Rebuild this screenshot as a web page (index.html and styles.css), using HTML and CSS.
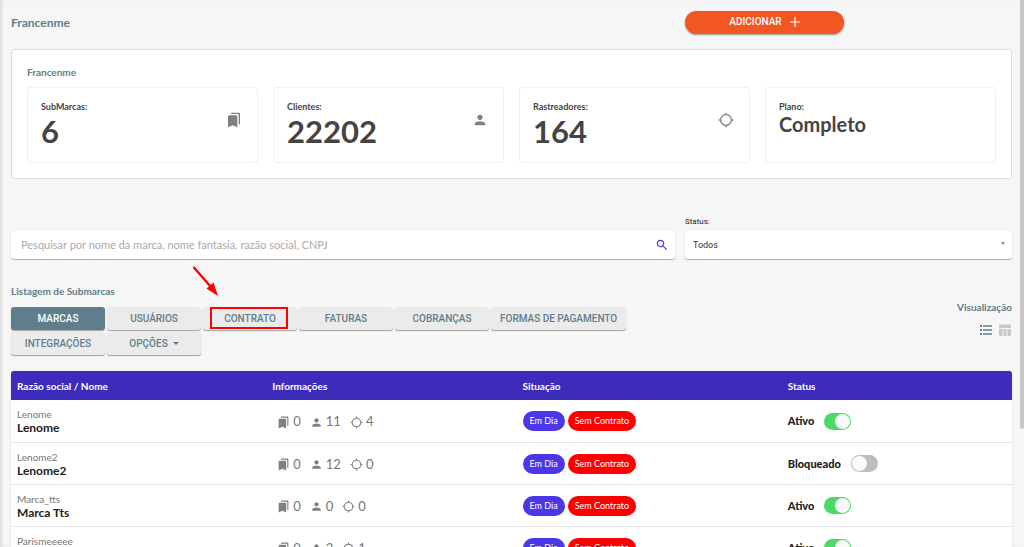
FILE: index.html
```html
<!DOCTYPE html>
<html lang="pt-BR">
<head>
<meta charset="utf-8">
<meta name="viewport" content="width=device-width, initial-scale=1">
<title>Francenme</title>
<link rel="stylesheet" href="styles.css">
</head>
<body>
<svg class="sprite" aria-hidden="true">
  <symbol id="bookmarks" viewBox="0 0 24 24"><path d="M19 18l2 1V3c0-1.100-.9-2-2-2H8.990C7.890 1 7 1.900 7 3h10c1.100 0 2 .9 2 2v13zM15 5H5c-1.100 0-2 .9-2 2v16l7-3 7 3V7c0-1.100-.9-2-2-2z"/></symbol>
  <symbol id="person" viewBox="0 0 24 24"><path d="M12 12c2.210 0 4-1.790 4-4s-1.790-4-4-4-4 1.790-4 4 1.790 4 4 4zm0 2c-2.670 0-8 1.340-8 4v2h16v-2c0-2.660-5.330-4-8-4z"/></symbol>
  <symbol id="target" viewBox="0 0 24 24"><path d="M20.940 11c-.46-4.170-3.770-7.480-7.940-7.940V1h-2v2.060C6.830 3.520 3.520 6.830 3.060 11H1v2h2.060c.46 4.170 3.770 7.480 7.940 7.940V23h2v-2.060c4.170-.46 7.480-3.770 7.940-7.940H23v-2h-2.060zM12 19c-3.870 0-7-3.130-7-7s3.130-7 7-7 7 3.130 7 7-3.130 7-7 7z"/></symbol>
</svg>

<main class="page">
  <header class="split topbar">
    <h1 class="brand">Francenme</h1>
    <button class="add" type="button">ADICIONAR
      <svg class="add-icon" viewBox="0 0 10 10" aria-hidden="true"><path d="M5 0v10M0 5h10" stroke="currentColor" stroke-width="1.200"/></svg>
    </button>
  </header>

  <section class="summary">
    <h2 class="section-title">Francenme</h2>
    <div class="stats">
      <article class="stat"><div><p class="stat-label">SubMarcas:</p><p class="stat-value">6</p></div><svg class="stat-icon"><use href="#bookmarks"/></svg></article>
      <article class="stat"><div><p class="stat-label">Clientes:</p><p class="stat-value">22202</p></div><svg class="stat-icon"><use href="#person"/></svg></article>
      <article class="stat"><div><p class="stat-label">Rastreadores:</p><p class="stat-value">164</p></div><svg class="stat-icon"><use href="#target"/></svg></article>
      <article class="stat"><div><p class="stat-label">Plano:</p><p class="stat-value stat-plan">Completo</p></div></article>
    </div>
  </section>

  <form class="split filters">
    <div class="search">
      <input class="search-input" type="text" aria-label="Pesquisar" placeholder="Pesquisar por nome da marca, nome fantasia, razão social, CNPJ">
      <button class="search-button" type="button" aria-label="Buscar"><svg class="search-icon" viewBox="0 0 24 24"><path d="M15.500 14h-.79l-.28-.27C15.410 12.590 16 11.110 16 9.500 16 5.910 13.090 3 9.500 3S3 5.910 3 9.500 5.910 16 9.500 16c1.610 0 3.090-.59 4.230-1.570l.27.28v.79l5 4.990L20.490 19l-4.990-5zm-6 0C7.010 14 5 11.990 5 9.500S7.010 5 9.500 5 14 7.010 14 9.500 11.990 14 9.500 14z"/></svg></button>
    </div>
    <div class="status-field">
      <label class="status-label" for="status">Status:</label>
      <div class="select-box">
        <select class="status-select" id="status"><option>Todos</option><option>Ativo</option><option>Bloqueado</option></select>
        <span class="caret caret-small"></span>
      </div>
    </div>
  </form>

  <section class="split listing">
    <div>
      <h2 class="section-title">Listagem de Submarcas</h2>
      <nav class="tabs">
        <button class="tab tab-active" type="button">MARCAS</button>
        <button class="tab" type="button">USUÁRIOS</button>
        <div class="marked">
          <button class="tab" type="button">CONTRATO</button>
          <span class="mark-box"></span>
          <svg class="mark-arrow" viewBox="0 0 28 32" aria-hidden="true"><path d="M1.500 2L19 22" stroke="#f00" stroke-width="2.400" fill="none"/><path d="M26 31L14.500 23.500L21.500 17.500Z" fill="#f00"/></svg>
        </div>
        <button class="tab" type="button">FATURAS</button>
        <button class="tab" type="button">COBRANÇAS</button>
        <button class="tab" type="button">FORMAS DE PAGAMENTO</button>
        <button class="tab" type="button">INTEGRAÇÕES</button>
        <button class="tab" type="button">OPÇÕES <span class="caret"></span></button>
      </nav>
    </div>
    <div class="view">
      <h2 class="section-title">Visualização</h2>
      <div class="view-buttons">
        <button class="view-button view-on" type="button" aria-label="Lista"><svg viewBox="0 0 12 10"><path d="M0 0h2v2H0zM0 4h2v2H0zM0 8h2v2H0zM3 .3h9v1.400H3zM3 4.300h9v1.400H3zM3 8.300h9v1.400H3z"/></svg></button>
        <button class="view-button" type="button" aria-label="Tabela"><svg viewBox="0 0 12 12"><path d="M0 1.500Q0 .5 1 .5H11Q12 .5 12 1.500V4H0zM0 5h3.500v7H1Q0 12 0 11zM4.500 5h3v7h-3zM8.500 5H12v6q0 1-1 1H8.500z"/></svg></button>
      </div>
    </div>
  </section>

  <table class="brands">
    <thead>
      <tr><th class="col-name">Razão social / Nome</th><th class="col-info">Informações</th><th class="col-situation">Situação</th><th>Status</th></tr>
    </thead>
    <tbody>
      <tr>
        <td><span class="legal">Lenome</span><strong class="name">Lenome</strong></td>
        <td><div class="info"><span class="count"><svg><use href="#bookmarks"/></svg>0</span><span class="count"><svg><use href="#person"/></svg>11</span><span class="count"><svg><use href="#target"/></svg>4</span></div></td>
        <td><div class="pills"><span class="pill">Em Dia</span><span class="pill pill-red">Sem Contrato</span></div></td>
        <td><label class="state">Ativo<input class="toggle" type="checkbox" checked></label></td>
      </tr>
      <tr>
        <td><span class="legal">Lenome2</span><strong class="name">Lenome2</strong></td>
        <td><div class="info"><span class="count"><svg><use href="#bookmarks"/></svg>0</span><span class="count"><svg><use href="#person"/></svg>12</span><span class="count"><svg><use href="#target"/></svg>0</span></div></td>
        <td><div class="pills"><span class="pill">Em Dia</span><span class="pill pill-red">Sem Contrato</span></div></td>
        <td><label class="state">Bloqueado<input class="toggle" type="checkbox"></label></td>
      </tr>
      <tr>
        <td><span class="legal">Marca_tts</span><strong class="name">Marca Tts</strong></td>
        <td><div class="info"><span class="count"><svg><use href="#bookmarks"/></svg>0</span><span class="count"><svg><use href="#person"/></svg>0</span><span class="count"><svg><use href="#target"/></svg>0</span></div></td>
        <td><div class="pills"><span class="pill">Em Dia</span><span class="pill pill-red">Sem Contrato</span></div></td>
        <td><label class="state">Ativo<input class="toggle" type="checkbox" checked></label></td>
      </tr>
      <tr>
        <td><span class="legal">Parismeeeee</span><strong class="name">Parismeeeee</strong></td>
        <td><div class="info"><span class="count"><svg><use href="#bookmarks"/></svg>0</span><span class="count"><svg><use href="#person"/></svg>2</span><span class="count"><svg><use href="#target"/></svg>1</span></div></td>
        <td><div class="pills"><span class="pill">Em Dia</span><span class="pill pill-red">Sem Contrato</span></div></td>
        <td><label class="state">Ativo<input class="toggle" type="checkbox" checked></label></td>
      </tr>
    </tbody>
  </table>
</main>
<div class="scroll-thumb"></div>
</body>
</html>
```
FILE: styles.css
```css
* { box-sizing: border-box; }
body {
  margin: 0;
  height: 100vh;
  overflow: hidden;
  background: #f6f6f6;
  box-shadow: inset 3px 0 3px -1px #dcdcdc;
  color: #444;
  font: 10px/14px Lato, "Noto Sans", sans-serif;
}
h1, h2, p { margin: 0; }
button, input, select { font: inherit; color: inherit; border: 0; padding: 0; margin: 0; }
button { cursor: pointer; }
svg { display: block; fill: currentColor; }
.sprite { position: absolute; width: 0; height: 0; }
.page { padding: 11px 12px 0 11px; }
.split { display: grid; grid-template-columns: 67fr 33fr; column-gap: 10px; }

.topbar { align-items: center; }
.brand { font-size: 12px; line-height: 16px; font-weight: 700; color: #607d8b; }
.add {
  display: flex; align-items: center; justify-content: center; gap: 8px;
  width: 159px; height: 23px; padding-bottom: 1px; border-radius: 12px;
  background: #f15623; color: #fff; font: 500 10px/14px Roboto, sans-serif;
  box-shadow: 0 1px 2px rgba(0,0,0,.4);
}
.add-icon { width: 10px; height: 10px; }

.section-title { font-size: 10px; line-height: 14px; font-weight: 700; color: #607d8b; }
.summary { margin-top: 15px; padding: 15px; background: #fff; border: 1px solid #dedede; border-radius: 3px; }
.stats { display: grid; grid-template-columns: repeat(4, 1fr); gap: 15px; margin-top: 8px; }
.stat { display: flex; justify-content: space-between; height: 76px; padding: 12px 15px 0 13px; border: 1px solid #f0f0f0; border-radius: 3px; }
.stat-label { font-size: 9px; line-height: 14px; font-weight: 700; }
.stat-value { font-size: 31px; line-height: 34px; font-weight: 700; }
.stat-plan { font-size: 20px; line-height: 20px; }
.stat-icon { width: 16px; height: 16px; margin-top: 12px; color: #808080; }

.filters { margin-top: 36px; align-items: end; }
.search, .select-box { display: flex; align-items: center; height: 28px; background: #fff; border-radius: 3px; box-shadow: 0 1px 1px rgba(0,0,0,.3); }
.search-input { flex: 1; min-width: 0; height: 28px; padding: 0 0 2px 10px; background: none; outline: 0; font-size: 11px; }
.search-input::placeholder { color: #aaa; opacity: 1; }
.search-button { width: 14px; margin-right: 6px; background: none; color: #4b37e8; }
.search-icon { width: 14px; height: 14px; }
.status-label { display: block; margin-bottom: 2px; font: 8px/14px Roboto, sans-serif; color: #222; }
.status-select { flex: 1; height: 28px; padding-left: 8px; appearance: none; background: none; outline: 0; font: 9px/14px Roboto, sans-serif; color: #333; }
.caret { border: 3px solid transparent; border-top-color: currentColor; border-bottom: 0; }
.caret-small { border-width: 2px; border-top-width: 3px; border-bottom: 0; margin: 0 7px 4px 0; color: #888; }

.listing { margin-top: 25px; }
.tabs { display: flex; flex-wrap: wrap; gap: 2px; margin-top: 9px; }
.tab {
  display: flex; align-items: center; justify-content: center; gap: 5px;
  min-width: 94px; height: 23px; padding: 0 9px; border-radius: 3px;
  background: #ebebeb; color: #607d8b; font: 500 10px/14px Roboto, sans-serif;
  box-shadow: 0 1px 1px rgba(0,0,0,.35);
}
.tab-active { background: #607d8b; color: #fff; }
.marked { position: relative; }
.mark-box { position: absolute; top: 0; left: 7px; width: 78px; height: 22px; border: 2px solid #f00; }
.mark-arrow { position: absolute; top: -42px; left: -11px; width: 28px; height: 32px; }
.view { display: flex; flex-direction: column; align-items: flex-end; padding-top: 16px; }
.view-buttons { display: flex; align-items: center; gap: 7px; margin-top: 10px; padding-right: 1px; }
.view-button { width: 12px; background: none; color: #c8c8c8; }
.view-on { color: #607d8b; }

.brands { width: 100%; margin-top: 16px; table-layout: fixed; border-spacing: 0; background: #fff; border-radius: 3px 3px 0 0; box-shadow: 0 0 1px rgba(0,0,0,.4); }
.brands th { height: 29px; padding: 0 6px; background: #3d2cb9; color: #fff; text-align: left; font-weight: 700; }
.brands th:first-child { border-top-left-radius: 3px; }
.brands th:last-child { border-top-right-radius: 3px; }
.brands td { height: 42px; padding: 0 6px; border-bottom: 1px solid #e4e4e4; }
.brands tbody tr:first-child td { height: 43px; }
.col-name { width: 25.5%; }
.col-info { width: 25%; }
.col-situation { width: 26.5%; }
.legal { display: block; color: #777; }
.name { display: block; font-size: 12px; font-weight: 700; color: #222; }
.info { display: flex; gap: 9px; padding-left: 5px; font-size: 13px; color: #777; }
.count { display: flex; align-items: center; gap: 3px; }
.count svg { width: 13px; height: 13px; margin-top: 2px; color: #808080; }
.pills { display: flex; gap: 3px; }
.pill { padding: 3px 7px; border-radius: 10px; background: #4b37e8; color: #fff; font-size: 9px; }
.pill-red { background: #f00; }
.state { display: inline-flex; align-items: center; gap: 10px; font-size: 11px; font-weight: 900; color: #222; }
.toggle { appearance: none; display: flex; width: 27px; height: 17px; padding: 1px; border-radius: 9px; background: #bdbdbd; }
.toggle::before { content: ""; width: 15px; height: 15px; border-radius: 50%; background: #fafafa; }
.toggle:checked { justify-content: flex-end; background: #4cd964; }
.scroll-thumb { position: fixed; top: 0; right: 0; width: 4px; height: 429px; background: #c6c6c6; border-radius: 0 0 2px 2px; }
```
